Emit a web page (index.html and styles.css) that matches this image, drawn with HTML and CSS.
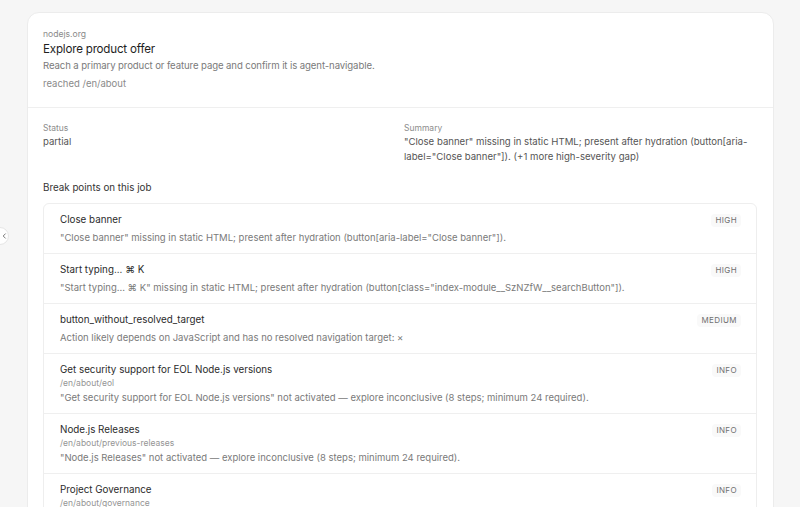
FILE: index.html
```html
<!DOCTYPE html>
<html lang="en">
<head>
    <meta charset="UTF-8">
    <meta name="viewport" content="width=device-width, initial-scale=1.0">
    <title>Explore product offer — nodejs.org</title>
    <link rel="stylesheet" href="styles.css">
</head>
<body>

    <button class="collapse-handle" aria-label="Collapse sidebar">
        <svg width="8" height="8" viewBox="0 0 8 8"><path d="M5 1.5 2.5 4 5 6.5" fill="none" stroke="#777" stroke-width="1.1" stroke-linecap="round" stroke-linejoin="round"/></svg>
    </button>

    <div class="job-card">
        <div class="job-head">
            <div class="job-site">nodejs.org</div>
            <h1 class="job-title">Explore product offer</h1>
            <p class="job-goal">Reach a primary product or feature page and confirm it is agent-navigable.</p>
            <p class="job-reached">reached /en/about</p>
        </div>

        <div class="job-body">
            <div class="job-meta">
                <div>
                    <div class="meta-label">Status</div>
                    <div class="meta-value">partial</div>
                </div>
                <div>
                    <div class="meta-label">Summary</div>
                    <div class="meta-value">"Close banner" missing in static HTML; present after hydration (button[aria-label="Close banner"]). (+1 more high-severity gap)</div>
                </div>
            </div>

            <h2 class="section-title">Break points on this job</h2>

            <ul class="bp-list">
                <li class="bp-row">
                    <div class="bp-main">
                        <div class="bp-title">Close banner</div>
                        <div class="bp-desc">"Close banner" missing in static HTML; present after hydration (button[aria-label="Close banner"]).</div>
                    </div>
                    <span class="badge">HIGH</span>
                </li>
                <li class="bp-row">
                    <div class="bp-main">
                        <div class="bp-title">Start typing... ⌘ K</div>
                        <div class="bp-desc">"Start typing... ⌘ K" missing in static HTML; present after hydration (button[class="index-module__SzNZfW__searchButton"]).</div>
                    </div>
                    <span class="badge">HIGH</span>
                </li>
                <li class="bp-row">
                    <div class="bp-main">
                        <div class="bp-title">button_without_resolved_target</div>
                        <div class="bp-desc">Action likely depends on JavaScript and has no resolved navigation target: ×</div>
                    </div>
                    <span class="badge">MEDIUM</span>
                </li>
                <li class="bp-row">
                    <div class="bp-main">
                        <div class="bp-title">Get security support for EOL Node.js versions</div>
                        <div class="bp-path">/en/about/eol</div>
                        <div class="bp-desc">"Get security support for EOL Node.js versions" not activated — explore inconclusive (8 steps; minimum 24 required).</div>
                    </div>
                    <span class="badge">INFO</span>
                </li>
                <li class="bp-row">
                    <div class="bp-main">
                        <div class="bp-title">Node.js Releases</div>
                        <div class="bp-path">/en/about/previous-releases</div>
                        <div class="bp-desc">"Node.js Releases" not activated — explore inconclusive (8 steps; minimum 24 required).</div>
                    </div>
                    <span class="badge">INFO</span>
                </li>
                <li class="bp-row">
                    <div class="bp-main">
                        <div class="bp-title">Project Governance</div>
                        <div class="bp-path">/en/about/governance</div>
                        <div class="bp-desc">"Project Governance" not activated — explore inconclusive (8 steps; minimum 24 required).</div>
                    </div>
                    <span class="badge">INFO</span>
                </li>
            </ul>
        </div>
    </div>

</body>
</html>
```

FILE: styles.css
```css
body {
    font-family: Inter, "Noto Sans", sans-serif;
    background-color: #f6f6f6;
    color: #333;
    margin: 0;
    padding: 12px 26px 0 27px;
    height: 507px;
    box-sizing: border-box;
    overflow: hidden;
}
.collapse-handle {
    position: absolute;
    left: -9px;
    top: 227px;
    width: 18px;
    height: 18px;
    padding: 0 0 0 9px;
    border: 1px solid #e6e6e6;
    border-radius: 50%;
    background: #fff;
    display: flex;
    align-items: center;
    justify-content: center;
}
.job-card {
    background: #fff;
    border: 1px solid #ececec;
    border-radius: 12px;
    min-height: 520px;
}
.job-head {
    padding: 15px 15px 15px;
    border-bottom: 1px solid #efefef;
}
.job-site {
    font-size: 8.6px;
    line-height: 12px;
    color: #8a8a8a;
}
.job-title {
    margin: 0;
    font-size: 11.6px;
    line-height: 18px;
    font-weight: 400;
    letter-spacing: -0.2px;
    color: #1f1f1f;
}
.job-goal {
    margin: 0;
    font-size: 9.6px;
    line-height: 16px;
    letter-spacing: -0.1px;
    color: #7a7a7a;
}
.job-reached {
    margin: 2px 0 0;
    font-size: 9.5px;
    line-height: 16px;
    color: #8a8a8a;
}
.job-body {
    padding: 15px 16px 0 15px;
}
.job-meta {
    display: grid;
    grid-template-columns: 1fr 1fr;
    gap: 8px;
}
.meta-label {
    font-size: 8.5px;
    line-height: 11px;
    color: #8d8d8d;
}
.meta-value {
    font-size: 9.6px;
    line-height: 15px;
    color: #555;
}
.section-title {
    margin: 16px 0 7px;
    font-size: 9.8px;
    line-height: 16px;
    font-weight: 400;
    color: #333;
}
.bp-list {
    list-style: none;
    margin: 0;
    padding: 0;
    border: 1px solid #eeeeee;
    border-radius: 6px;
}
.bp-row {
    display: flex;
    justify-content: space-between;
    align-items: flex-start;
    gap: 12px;
    padding: 9px 15px 8px 16px;
    border-bottom: 1px solid #efefef;
}
.bp-title {
    font-size: 9.8px;
    line-height: 14px;
    color: #2b2b2b;
}
.bp-title + .bp-desc {
    margin-top: 3px;
}
.bp-path {
    font-size: 8.5px;
    line-height: 13px;
    color: #959595;
}
.bp-desc {
    font-size: 9.5px;
    line-height: 15px;
    color: #7a7a7a;
}
.badge {
    flex-shrink: 0;
    margin-top: 1px;
    padding: 1px 4px;
    border-radius: 4px;
    background: #f9f9f9;
    font-size: 8px;
    line-height: 11px;
    letter-spacing: 0.4px;
    color: #707070;
}
```
